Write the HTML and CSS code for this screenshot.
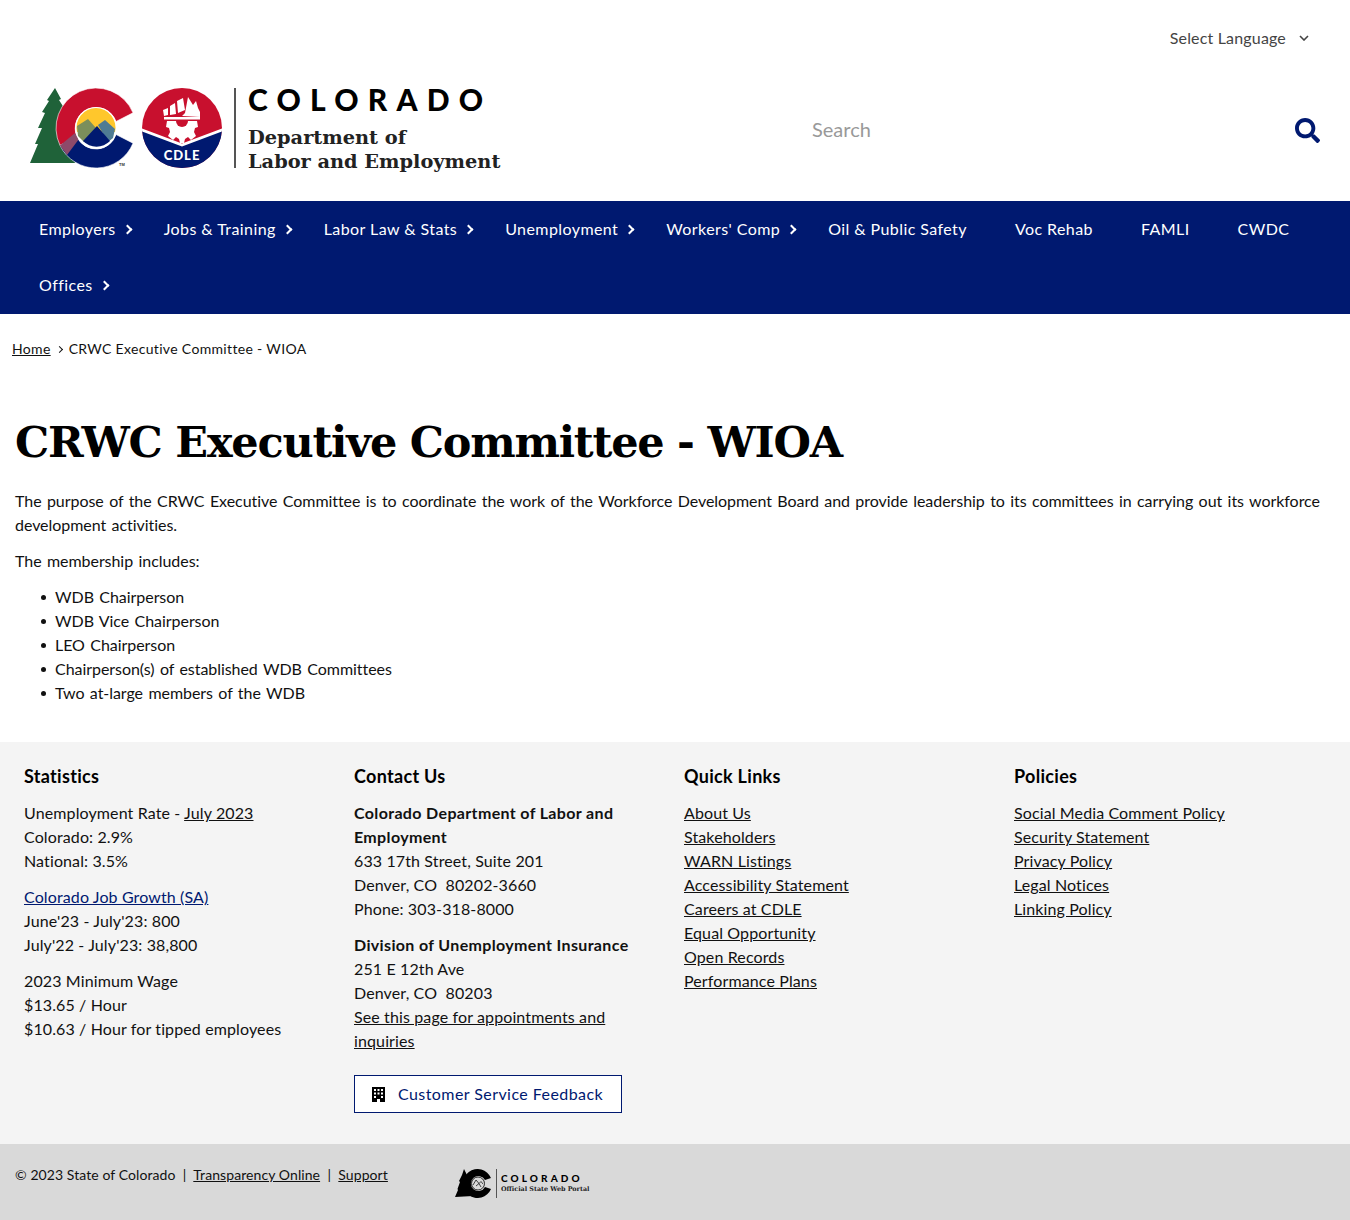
FILE: index.html
```html
<!DOCTYPE html>
<html lang="en">
<head>
<meta charset="utf-8">
<title>CRWC Executive Committee - WIOA</title>
<link rel="stylesheet" href="styles.css">
</head>
<body>
<header class="site-header">
  <div class="lang-row">
    <div class="lang">Select Language
      <svg class="lang-chevron" viewBox="0 0 10 6" width="10" height="6"><path d="M1 1l4 4 4-4" fill="none" stroke="#444" stroke-width="1.6"/></svg>
    </div>
  </div>
  <div class="brand-row">
    <div class="logo">
      <svg class="logo-mark" viewBox="0 0 192 80" width="192" height="80">
        <path d="M25 0 L31 11 L29 12 L36 23 L33 24 L39 36 L37 37 L45 75 L0 75 L8 56 L5 56 L12 40 L8 40 L15 25 L12 24 L19 13 L17 12 Z" fill="#1f6239"/>
        <path d="M103 24.800 A40 40 0 1 0 30 57.440 L47 49 A21 21 0 1 1 86 33.500 Z" fill="#c8102e" stroke="#fff" stroke-width=".6"/>
        <path d="M30 57.440 A40 40 0 0 0 103 55.200 L86 46.500 A21 21 0 0 1 47 49 Z" fill="#001970" stroke="#fff" stroke-width=".6"/>
        <path d="M30 57.440 L45 45 L49 51 L37 67 Z" fill="#8d4a6a"/>
        <circle cx="66" cy="40" r="21" fill="#fff"/>
        <path d="M47 44 A19.500 19.500 0 1 1 85 44 Z" fill="#ffc72c"/>
        <path d="M47 38 L58 31 L66 40 L54 54 L48 48 Z" fill="#7b8f5b"/>
        <path d="M68 37 L75 32 L85 41 L83 50 L78 54 Z" fill="#4f7b94"/>
        <path d="M53 53 L67 38 L80 53 A19 19 0 0 1 53 53 Z" fill="#001970"/>
        <text class="tm" x="89" y="78">TM</text>
        <circle cx="152" cy="40" r="40" fill="#c8102e"/>
        <path d="M112.050 42 L152 57 L191.950 42 A40 40 0 0 1 112.050 42 Z" fill="#001970"/>
        <path d="M112 40.500 L152 55.500 L192 40.500 L191.900 43.500 L152 58.500 L112.100 43.500 Z" fill="#fff"/>
        <path d="M133 22 L138 20 L138 27 L134 28 Z M140 18 L145 15 L146 26 L140 27 Z M147 13 L153 10 L155 22 L148 25 Z" fill="#fff"/>
        <path d="M155 25 L158 9 L163 17 L166 13 L168 20 L170 24 L170 29 L152 28 Z" fill="#fff"/>
        <rect x="134" y="29" width="36" height="2.500" fill="#fff"/>
        <path d="M137 33 H167 L168 39 L165 40 L164 44 L166 48 L161 52 L158 49 L155 51 L154 55 H150 L149 51 L146 49 L143 52 L138 48 L140 44 L139 40 L136 39 Z" fill="#fff"/>
        <path d="M146 33 A6 6 0 0 0 158 33 Z" fill="#c8102e"/>
        <text class="cdle" x="152" y="72" text-anchor="middle">CDLE</text>
      </svg>
      <div class="logo-divider"></div>
      <div class="logo-text">
        <div class="logo-state">COLORADO</div>
        <div class="logo-dept">Department of<br>Labor and Employment</div>
      </div>
    </div>
    <form class="search">
      <span class="search-placeholder">Search</span>
      <svg class="search-icon" viewBox="0 0 512 512" width="25" height="25"><path fill="#001970" d="M505 442.700L405.300 343c-4.500-4.500-10.600-7-17-7H372c27.600-35.300 44-79.700 44-128C416 93.100 322.900 0 208 0S0 93.100 0 208s93.100 208 208 208c48.300 0 92.700-16.400 128-44v16.300c0 6.400 2.500 12.500 7 17l99.700 99.700c9.400 9.400 24.600 9.400 33.900 0l28.300-28.300c9.400-9.400 9.400-24.600.1-34zM208 336c-70.700 0-128-57.200-128-128 0-70.700 57.200-128 128-128 70.700 0 128 57.200 128 128 0 70.700-57.200 128-128 128z"/></svg>
    </form>
  </div>
</header>
<nav class="main-nav">
  <a class="nav-item has-sub">Employers</a>
  <a class="nav-item has-sub">Jobs &amp; Training</a>
  <a class="nav-item has-sub">Labor Law &amp; Stats</a>
  <a class="nav-item has-sub">Unemployment</a>
  <a class="nav-item has-sub">Workers' Comp</a>
  <a class="nav-item">Oil &amp; Public Safety</a>
  <a class="nav-item">Voc Rehab</a>
  <a class="nav-item">FAMLI</a>
  <a class="nav-item">CWDC</a>
  <a class="nav-item has-sub">Offices</a>
</nav>
<div class="breadcrumb"><a class="u">Home</a><span class="crumb-sep"></span>CRWC Executive Committee - WIOA</div>
<main class="content">
  <h1>CRWC Executive Committee - WIOA</h1>
  <p>The purpose of the CRWC Executive Committee is to coordinate the work of the Workforce Development Board and provide leadership to its committees in carrying out its workforce development activities.</p>
  <p>The membership includes:</p>
  <ul>
    <li>WDB Chairperson</li>
    <li>WDB Vice Chairperson</li>
    <li>LEO Chairperson</li>
    <li>Chairperson(s) of established WDB Committees</li>
    <li>Two at-large members of the WDB</li>
  </ul>
</main>
<footer class="site-footer">
  <section>
    <h2>Statistics</h2>
    <p>Unemployment Rate - <a class="u">July 2023</a><br>Colorado: 2.9%<br>National: 3.5%</p>
    <p><a class="u navy">Colorado Job Growth (SA)</a><br>June'23 - July'23: 800<br>July'22 - July'23: 38,800</p>
    <p>2023 Minimum Wage<br>$13.65 / Hour<br>$10.63 / Hour for tipped employees</p>
  </section>
  <section>
    <h2>Contact Us</h2>
    <p><strong>Colorado Department of Labor and Employment</strong><br>633 17th Street, Suite 201<br>Denver, CO&nbsp; 80202-3660<br>Phone: 303-318-8000</p>
    <p><strong>Division of Unemployment Insurance</strong><br>251 E 12th Ave<br>Denver, CO&nbsp; 80203<br><a class="u">See this page for appointments and inquiries</a></p>
    <a class="feedback">
      <svg viewBox="0 0 13 15" width="13" height="15"><path fill="#000" fill-rule="evenodd" d="M0 0H13V15H8V12H5V15H0Z M2 2V4H4V2Z M5.500 2V4H7.500V2Z M9 2V4H11V2Z M2 5.500V7.500H4V5.500Z M5.500 5.500V7.500H7.500V5.500Z M9 5.500V7.500H11V5.500Z M2 9V11H4V9Z M9 9V11H11V9Z"/></svg>
      <span>Customer Service Feedback</span>
    </a>
  </section>
  <section>
    <h2>Quick Links</h2>
    <p class="links"><a class="u">About Us</a><a class="u">Stakeholders</a><a class="u">WARN Listings</a><a class="u">Accessibility Statement</a><a class="u">Careers at CDLE</a><a class="u">Equal Opportunity</a><a class="u">Open Records</a><a class="u">Performance Plans</a></p>
  </section>
  <section>
    <h2>Policies</h2>
    <p class="links"><a class="u">Social Media Comment Policy</a><a class="u">Security Statement</a><a class="u">Privacy Policy</a><a class="u">Legal Notices</a><a class="u">Linking Policy</a></p>
  </section>
</footer>
<div class="bottom-bar">
  <div class="legal">© 2023 State of Colorado &nbsp;|&nbsp; <a class="u">Transparency Online</a> &nbsp;|&nbsp; <a class="u">Support</a></div>
  <div class="portal-logo">
    <svg viewBox="0 0 37 29" width="37" height="29">
      <path d="M9 0 L12 6 L15 14 L18 27 L0 28 L3 21 L2.500 20 L5 13 L4 12 L7 6 Z" fill="#000"/>
      <path d="M36 9 A14.500 14.500 0 1 0 36 20 L30 18 A7.500 7.500 0 1 1 30 11 Z" fill="#000"/>
      <circle cx="23" cy="14.500" r="6.500" fill="none" stroke="#000" stroke-width=".8"/>
      <path d="M18 16 L21 11 L24 14.500 L26 12.500 L28 15 M21 17 L24 14.500 L26 18" fill="none" stroke="#000" stroke-width=".7"/>
    </svg>
    <div class="portal-divider"></div>
    <div class="portal-text">
      <div class="portal-state">COLORADO</div>
      <div class="portal-sub">Official State Web Portal</div>
    </div>
  </div>
</div>
</body>
</html>
```
FILE: styles.css
```css
* { box-sizing: border-box; }
body { margin: 0; background: #fff; color: #111; font: 16px/24px "Lato", sans-serif; letter-spacing: .12px; }
strong { letter-spacing: .35px; }
.u { color: inherit; text-decoration: underline; }
.navy { color: #001970; }
.lang-row { display: flex; justify-content: flex-end; padding: 26px 41px 0 0; height: 88px; }
.lang { color: #444; display: flex; align-items: center; height: 24px; gap: 13px; letter-spacing: .17px; }
.brand-row { display: flex; justify-content: space-between; align-items: flex-start; height: 113px; padding: 0 30px; }
.logo { display: flex; height: 80px; letter-spacing: 0; }
.logo-mark { display: block; }
.tm { font: 700 4px "Liberation Sans", sans-serif; fill: #333; }
.cdle { font: 900 13px "Lato", sans-serif; letter-spacing: 1px; fill: #fff; }
.logo-divider { width: 2px; height: 80px; background: #555; margin: 0 12px; }
.logo-text { color: #000; }
.logo-state { font: 900 30px/24px "Lato", sans-serif; letter-spacing: 9.200px; margin-bottom: 15px; margin-top: -1px; }
.logo-dept { font: 700 19.350px/24px "DejaVu Serif", serif; color: #222; }
.search { display: flex; justify-content: space-between; align-items: center; width: 508px; height: 84px; }
.search-placeholder { color: #999; font-size: 20px; letter-spacing: 0; margin-top: -2px; }
.main-nav { display: flex; flex-wrap: wrap; background: #001970; padding: 0 15px 1px; letter-spacing: .42px; }
.nav-item { position: relative; color: #fff; padding: 0 24px; height: 56px; line-height: 55px; }
.has-sub::after { content: ""; position: absolute; right: 9px; top: 25px; width: 5px; height: 5px; border: solid #fff; border-width: 2px 2px 0 0; transform: rotate(45deg); }
.breadcrumb { font-size: 14px; padding: 23px 12px 0; height: 64px; letter-spacing: .33px; }
.crumb-sep { display: inline-block; width: 5px; height: 5px; margin: 0 7px 2px 6px; border: solid #111; border-width: 1.200px 1.200px 0 0; transform: rotate(45deg); }
.content { padding: 38px 15px 0; height: 364px; }
.content p, .content li { letter-spacing: -.05px; word-spacing: 1.370px; }
h1 { font: 700 43px/52px "DejaVu Serif", serif; letter-spacing: -1.230px; margin: 0 0 21px; color: #000; }
p { margin: 0 0 12px; }
ul { margin: 0; padding: 0 0 0 26px; list-style: none; }
li { display: flex; gap: 9px; }
li::before { content: ""; flex: none; width: 5px; height: 5px; margin-top: 10px; border-radius: 50%; background: #111; }
.site-footer { display: grid; grid-template-columns: repeat(4, 330px); padding: 22px 0 0 24px; background: #f4f4f4; height: 402px; }
.site-footer section { padding-right: 30px; }
h2 { font-size: 18px; line-height: 24px; font-weight: 700; margin: 0 0 13px; color: #000; letter-spacing: .3px; }
.links a { display: block; width: fit-content; }
.feedback { display: flex; align-items: center; gap: 13px; width: 268px; height: 38px; padding-left: 17px; margin-top: 22px; border: 1px solid #001970; color: #001970; background: #fff; letter-spacing: .43px; }
.bottom-bar { display: flex; background: #d9d9d9; height: 76px; padding: 19px 0 0 15px; font-size: 14px; letter-spacing: .08px; }
.legal { width: 440px; height: 24px; }
.portal-logo { display: flex; height: 29px; margin-top: 6px; }
.portal-divider { width: 1px; background: #555; margin: 0 4px; }
.portal-state { font: 900 10px/12px "Lato", sans-serif; letter-spacing: 3.100px; margin-top: 3px; color: #000; }
.portal-sub { font: 700 6.400px/10px "DejaVu Serif", serif; color: #222; letter-spacing: 0; }
```
